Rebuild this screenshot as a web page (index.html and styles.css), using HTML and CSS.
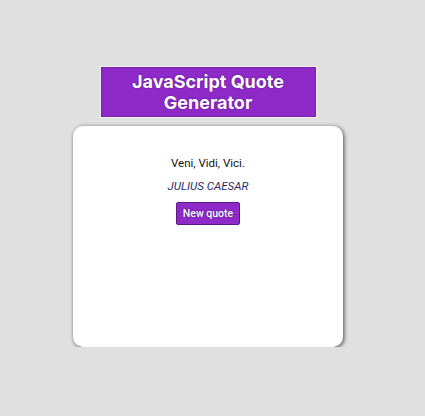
FILE: index.html
```html
<!DOCTYPE html>
<html lang="en">
<head>
<meta charset="utf-8">
<title>JavaScript Quote Generator</title>
<link rel="stylesheet" href="styles.css">
</head>
<body>
<div class="page">
  <h1 class="title">JavaScript Quote Generator</h1>
  <main class="card">
    <p class="quote">Veni, Vidi, Vici.</p>
    <p class="author">JULIUS CAESAR</p>
    <button class="btn">New quote</button>
  </main>
</div>
</body>
</html>
```

FILE: styles.css
```css
html, body {
  margin: 0;
  padding: 0;
  background: #e0e0e0;
  font-family: Roboto, "Noto Sans", sans-serif;
}
.page {
  width: 416px;
  display: flex;
  flex-direction: column;
  align-items: center;
  padding-top: 67px;
}
.title {
  box-sizing: border-box;
  width: 215px;
  height: 50px;
  margin: 0;
  background: #8e2bc8;
  border: 1px solid #7420a6;
  box-shadow: 0 0 0 1px #f4f0f6;
  color: #fff;
  font-family: Inter, "Noto Sans", sans-serif;
  font-size: 18px;
  font-weight: 700;
  line-height: 21px;
  text-align: center;
  padding-top: 3px;
  text-shadow: 0 0 2px #5a1585;
}
.card {
  box-sizing: border-box;
  width: 270px;
  height: 221px;
  margin-top: 9px;
  background: #fff;
  border-radius: 10px;
  box-shadow: 1px 1px 4px #4a4a4a;
  display: flex;
  flex-direction: column;
  align-items: center;
  padding-top: 29px;
}
.quote {
  margin: 0;
  font-size: 11.5px;
  line-height: 16px;
  color: #111;
}
.author {
  margin: 7px 0 0;
  font-size: 11.5px;
  line-height: 16px;
  font-style: italic;
  color: #2b2a6b;
}
.btn {
  margin-top: 8px;
  height: 23px;
  padding: 0 6px;
  background: #8e2bc8;
  border: 1px solid #5d1a86;
  border-radius: 2px;
  color: #fff;
  font-family: Roboto, "Noto Sans", sans-serif;
  font-size: 10.5px;
  font-weight: 500;
  text-shadow: 0 0 2px #4a1070;
}
```
